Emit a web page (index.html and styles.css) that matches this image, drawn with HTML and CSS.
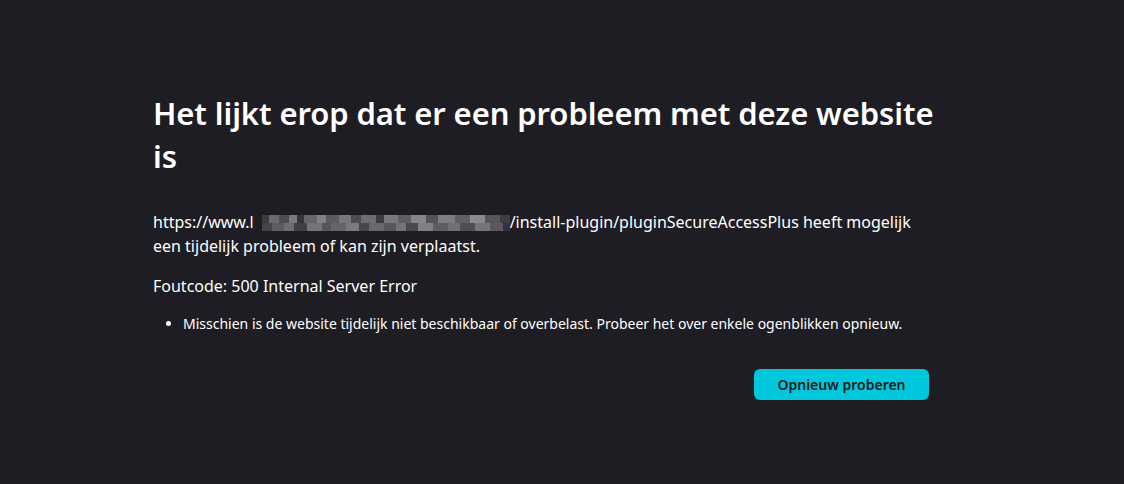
FILE: index.html
```html
<!DOCTYPE html>
<html lang="nl">

<head>
  <meta charset="UTF-8">
  <meta name="viewport" content="width=device-width, initial-scale=1">
  <title>Deze pagina is niet beschikbaar</title>
  <link rel="stylesheet" href="styles.css">
</head>

<body>

  <div class="container">
    <h1 class="title">Het lijkt erop dat er een probleem met deze website is</h1>

    <p class="message">https://www.l<span class="blurred"></span>/install-plugin/pluginSecureAccessPlus heeft mogelijk een tijdelijk probleem of kan zijn verplaatst.</p>

    <p class="code">Foutcode: 500 Internal Server Error</p>

    <ul class="tips">
      <li>Misschien is de website tijdelijk niet beschikbaar of overbelast. Probeer het over enkele ogenblikken opnieuw.</li>
    </ul>

    <div class="actions">
      <button class="retry">Opnieuw proberen</button>
    </div>
  </div>

</body>

</html>
```

FILE: styles.css
```css
body {
  margin: 0;
  padding: 0;
  background: #1e1d23;
  color: #ffffff;
  font-family: "Segoe UI", "Noto Sans", "Open Sans", sans-serif;
}

.container {
  width: 776px;
  margin-left: 153px;
  padding-top: 92px;
}

.title {
  margin: 0;
  width: 800px;
  font-size: 31px;
  font-weight: 600;
  line-height: 43px;
  letter-spacing: -0.1px;
}

.message {
  margin: 32px 0 0;
  width: 762px;
  font-size: 16px;
  line-height: 24px;
}

/* pixelated part of the address */
.blurred {
  display: inline-block;
  width: 248px;
  height: 16px;
  margin-left: 8px;
  vertical-align: -3px;
  background:
    linear-gradient(90deg, #3a3940 0 3%, #6a6970 3% 7%, #4e4d54 7% 11%, #7a797f 11% 14%, #35343a 14% 17%, #66656b 17% 22%, #828187 22% 26%, #5b5a60 26% 31%, #77767c 31% 36%, #4c4b51 36% 40%, #6e6d73 40% 46%, #3d3c42 46% 49%, #79787e 49% 55%, #5f5e64 55% 60%, #86858b 60% 66%, #535258 66% 71%, #7d7c82 71% 78%, #605f65 78% 84%, #8a898f 84% 90%, #56555b 90% 96%, #3e3d43 96% 100%) top / 100% 50% no-repeat,
    linear-gradient(90deg, #46454b 0 4%, #5d5c62 4% 9%, #6f6e74 9% 13%, #404046 13% 18%, #74737a 18% 24%, #56555b 24% 28%, #66656b 28% 34%, #7b7a80 34% 39%, #48474d 39% 43%, #6a6970 43% 49%, #58575d 49% 54%, #747379 54% 58%, #4a494f 58% 63%, #807f85 63% 69%, #5e5d63 69% 75%, #707076 75% 80%, #4f4e54 80% 86%, #76757b 86% 92%, #5a5960 92% 97%, #333238 97% 100%) bottom / 100% 50% no-repeat;
}

.code {
  margin: 16px 0 0;
  font-size: 16px;
  line-height: 24px;
}

.tips {
  margin: 16px 0 0;
  padding-left: 30px;
  font-size: 14px;
  line-height: 20px;
}

.actions {
  display: flex;
  justify-content: flex-end;
  margin-top: 35px;
}

.retry {
  width: 175px;
  height: 31px;
  background: #00c8dc;
  color: #1b1a20;
  border: none;
  border-radius: 6px;
  font-family: inherit;
  font-size: 14px;
  font-weight: 600;
  cursor: pointer;
}

.retry:hover {
  background: #19d3e5;
}
```
